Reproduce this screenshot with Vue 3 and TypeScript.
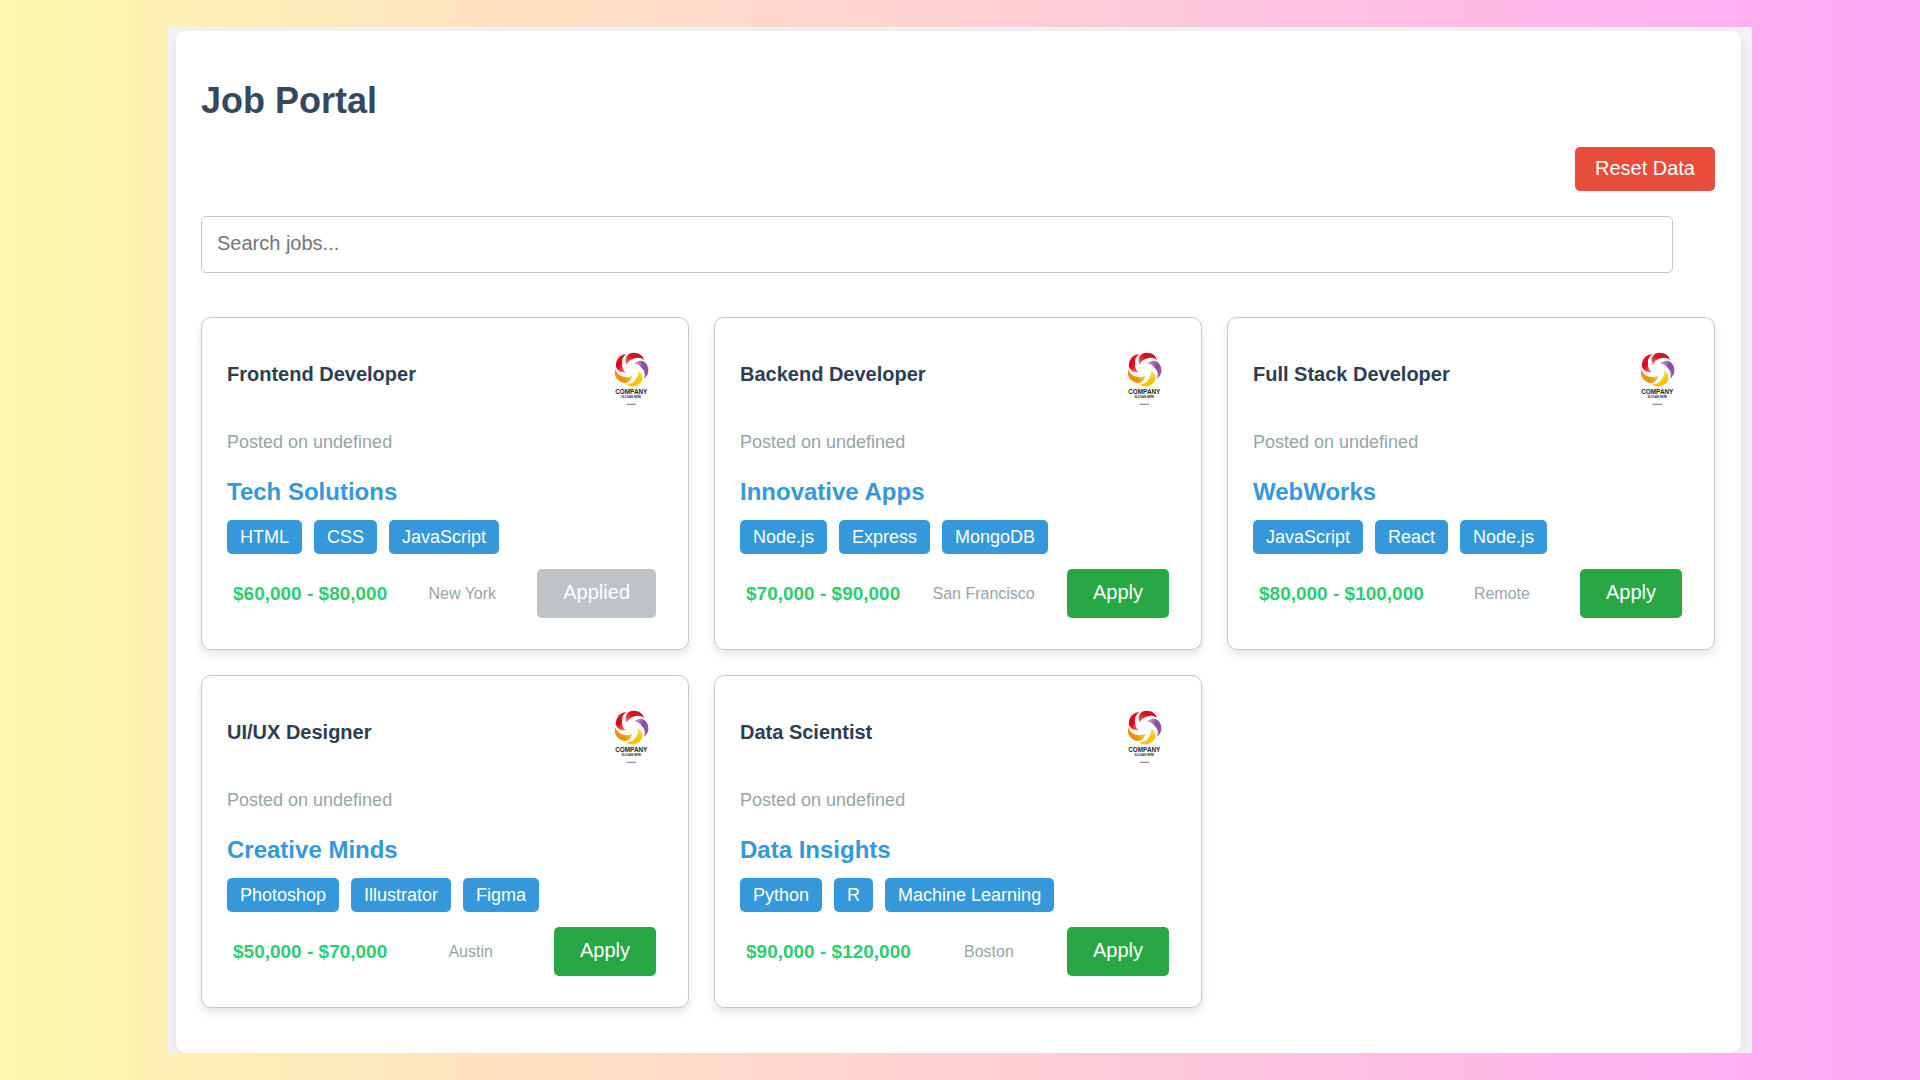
<script setup lang="ts">
import { computed, ref } from 'vue'

interface Job {
  title: string
  company: string
  skills: string[]
  salary: string
  location: string
  applied: boolean
}

const initialJobs: Job[] = [
  { title: 'Frontend Developer', company: 'Tech Solutions', skills: ['HTML', 'CSS', 'JavaScript'], salary: '$60,000 - $80,000', location: 'New York', applied: true },
  { title: 'Backend Developer', company: 'Innovative Apps', skills: ['Node.js', 'Express', 'MongoDB'], salary: '$70,000 - $90,000', location: 'San Francisco', applied: false },
  { title: 'Full Stack Developer', company: 'WebWorks', skills: ['JavaScript', 'React', 'Node.js'], salary: '$80,000 - $100,000', location: 'Remote', applied: false },
  { title: 'UI/UX Designer', company: 'Creative Minds', skills: ['Photoshop', 'Illustrator', 'Figma'], salary: '$50,000 - $70,000', location: 'Austin', applied: false },
  { title: 'Data Scientist', company: 'Data Insights', skills: ['Python', 'R', 'Machine Learning'], salary: '$90,000 - $120,000', location: 'Boston', applied: false },
]

const jobs = ref<Job[]>(initialJobs.map((job) => ({ ...job })))
const query = ref('')

const visibleJobs = computed(() => {
  const needle = query.value.trim().toLowerCase()
  return jobs.value.filter((job) =>
    [job.title, job.company, ...job.skills].some((text) => text.toLowerCase().includes(needle)),
  )
})

function resetData() {
  jobs.value = initialJobs.map((job) => ({ ...job, applied: false }))
}

// Petals of the company mark, clockwise from the top
const petals = ['crimson', 'purple', 'yellow', 'orange', 'red']
</script>

<template>
  <div class="page">
    <svg class="defs" width="0" height="0" aria-hidden="true">
      <defs>
        <linearGradient id="petal-crimson" x1="0" y1="1" x2="1" y2="0"><stop offset="0.1" stop-color="#ec6a68" /><stop offset="0.5" stop-color="#d7141f" /><stop offset="1" stop-color="#b81824" /></linearGradient>
        <linearGradient id="petal-purple" x1="0" y1="1" x2="1" y2="0"><stop offset="0.1" stop-color="#c79bd0" /><stop offset="0.5" stop-color="#8b4a9f" /><stop offset="1" stop-color="#9a62ad" /></linearGradient>
        <linearGradient id="petal-yellow" x1="0" y1="1" x2="1" y2="0"><stop offset="0.1" stop-color="#fbdf72" /><stop offset="0.5" stop-color="#f9c400" /><stop offset="1" stop-color="#f7bd1c" /></linearGradient>
        <linearGradient id="petal-orange" x1="0" y1="1" x2="1" y2="0"><stop offset="0.1" stop-color="#f9c04a" /><stop offset="0.5" stop-color="#f39200" /><stop offset="1" stop-color="#ee8a2c" /></linearGradient>
        <linearGradient id="petal-red" x1="0" y1="1" x2="1" y2="0"><stop offset="0.1" stop-color="#f06a70" /><stop offset="0.5" stop-color="#e2001a" /><stop offset="1" stop-color="#e6202c" /></linearGradient>
      </defs>
    </svg>

    <div class="frame">
      <main class="panel">
        <h1 class="heading">Job Portal</h1>
        <div class="actions">
          <button class="reset" type="button" @click="resetData">Reset Data</button>
        </div>
        <input v-model="query" class="search" type="text" placeholder="Search jobs..." aria-label="Search jobs" />

        <section class="jobs">
          <article v-for="job in visibleJobs" :key="job.title" class="card">
            <header class="card-head">
              <h2 class="job-title">{{ job.title }}</h2>
              <svg class="logo" viewBox="0 0 510 640" role="img" aria-label="Company logo">
                <g transform="translate(263 253)">
                  <path
                    v-for="(petal, i) in petals"
                    :key="petal"
                    d="M-45 -45 C-76 -105 -42 -163 22 -165 C78 -165 116 -137 128 -92 C96 -120 60 -122 28 -108 C-8 -96 -34 -80 -45 -45 Z"
                    :fill="`url(#petal-${petal})`"
                    :transform="`rotate(${i * 72})`"
                  />
                </g>
                <text class="logo-name" x="263" y="497">COMPANY</text>
                <text class="logo-slogan" x="263" y="541">SLOGAN HERE</text>
                <rect x="216" y="598" width="94" height="9" fill="#666" />
              </svg>
            </header>
            <p class="posted">Posted on undefined</p>
            <h3 class="company">{{ job.company }}</h3>
            <ul class="skills">
              <li v-for="skill in job.skills" :key="skill" class="skill">{{ skill }}</li>
            </ul>
            <footer class="card-foot">
              <span class="salary">{{ job.salary }}</span>
              <span class="location">{{ job.location }}</span>
              <button class="apply" type="button" :disabled="job.applied" @click="job.applied = true">
                {{ job.applied ? 'Applied' : 'Apply' }}
              </button>
            </footer>
          </article>
        </section>
      </main>
    </div>
  </div>
</template>

<style>
body {
  margin: 0;
}
</style>

<style scoped>
.page {
  box-sizing: border-box;
  min-height: 100vh;
  padding: 27px 168px;
  background: linear-gradient(90deg, #fff7ad, #ffa9f9);
  font-family: Arial, "Liberation Sans", sans-serif;
}

.defs {
  position: absolute;
}

.frame {
  overflow: hidden;
  padding: 4px 11px 0 8px;
  background: #f3f5f7;
}

.panel {
  padding: 49px 26px 45px 25px;
  border-radius: 10px;
  background: #fff;
  box-shadow: 0 5px 19px rgba(0, 0, 0, 0.1);
}

.heading {
  margin: 0 0 26px;
  color: #34495e;
  font-size: 36px;
  line-height: 41px;
}

.actions {
  display: flex;
  justify-content: flex-end;
  margin-bottom: 25px;
}

button {
  border: 0;
  border-radius: 5px;
  color: #fff;
  font-family: inherit;
  font-size: 20px;
  line-height: 23px;
  cursor: pointer;
}

.reset {
  padding: 10px 20px 11px;
  background: #e74c3c;
}

.search {
  display: block;
  box-sizing: border-box;
  width: calc(100% - 42px);
  height: 57px;
  margin-bottom: 44px;
  padding: 0 15px 2px;
  border: 1px solid #c3c9cd;
  border-radius: 5px;
  background: #fff;
  font-family: inherit;
  font-size: 20px;
}

.search::placeholder {
  color: #757575;
}

.jobs {
  display: grid;
  grid-template-columns: repeat(3, 1fr);
  gap: 25px;
}

.card {
  padding: 26px 32px 31px 25px;
  border: 1px solid #c3c9cd;
  border-radius: 10px;
  background: #fff;
  box-shadow: 0 5px 10px rgba(0, 0, 0, 0.1);
}

.card-head {
  display: flex;
  align-items: flex-start;
  justify-content: space-between;
  margin-bottom: 24px;
}

.job-title {
  margin: 0;
  color: #2c3e50;
  font-size: 20px;
  line-height: 60px;
}

.logo {
  width: 51px;
  height: 64px;
}

.logo-name,
.logo-slogan {
  fill: #222;
  font-weight: bold;
  text-anchor: middle;
}

.logo-name {
  font-size: 64px;
}

.logo-slogan {
  font-size: 27px;
}

.posted {
  margin: 0 0 26px;
  color: #95a5a6;
  font-size: 18px;
  line-height: 20px;
}

.company {
  margin: 0 0 14px;
  color: #3498db;
  font-size: 24px;
  line-height: 28px;
}

.skills {
  display: flex;
  flex-wrap: wrap;
  gap: 12px;
  margin: 0 0 15px;
  padding: 0;
  list-style: none;
}

.skill {
  padding: 0 13px;
  border-radius: 5px;
  background: #3498db;
  color: #fff;
  font-size: 18px;
  line-height: 34px;
}

.card-foot {
  display: flex;
  align-items: center;
  justify-content: space-between;
}

.salary {
  padding-left: 6px;
  color: #2ecc71;
  font-size: 19px;
  font-weight: bold;
}

.location {
  color: #95a5a6;
  font-size: 16px;
}

.apply {
  padding: 12px 26px 14px;
  background: #28a745;
}

.apply:disabled {
  background: #bdc3c7;
  cursor: default;
}
</style>
